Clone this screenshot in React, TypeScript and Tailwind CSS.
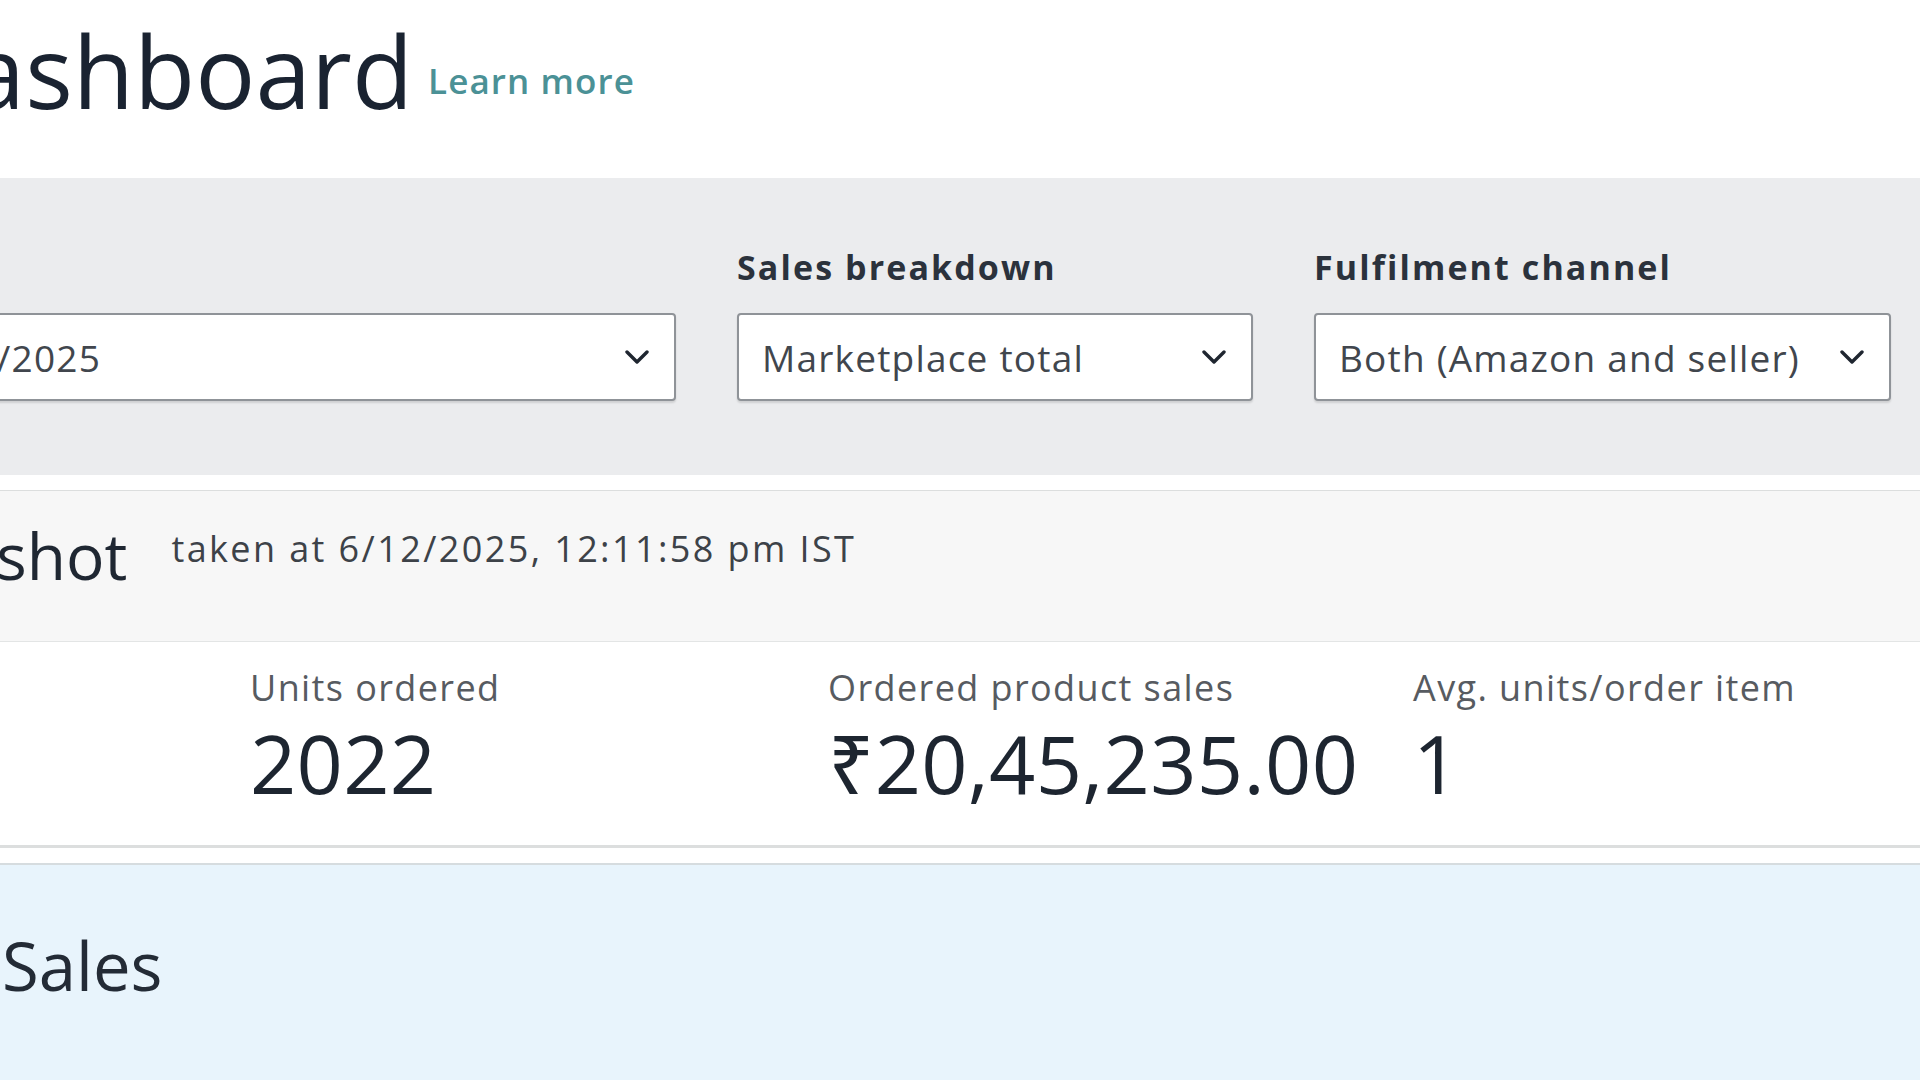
import React from 'react'

function Chevron() {
  return (
    <svg width="24" height="14" viewBox="0 0 24 14" fill="none" className="shrink-0">
      <path d="M2 2 L12 12 L22 2" stroke="#1f2630" strokeWidth="3.4" strokeLinecap="round" strokeLinejoin="round" />
    </svg>
  )
}

interface SelectProps {
  label: string
  value: string
  className: string
}

function FakeSelect({ label, value, className }: SelectProps) {
  return (
    <div className={className}>
      <p className="mb-[29px] text-[34px] font-bold leading-none tracking-[2.1px] text-[#2b323c]">{label}</p>
      <div className="flex h-[88px] items-center justify-between rounded-[4px] border-2 border-[#8f9398] bg-white pl-[23px] pr-[25px] shadow-[0_2px_2px_rgba(0,0,0,0.12)]">
        <span className="whitespace-nowrap text-[37px] leading-none tracking-[1.2px] text-[#41464d]">{value}</span>
        <Chevron />
      </div>
    </div>
  )
}

const metrics = [
  { label: 'Total order items', value: '2022' },
  { label: 'Units ordered', value: '2022' },
  { label: 'Ordered product sales', value: '₹20,45,235.00' },
  { label: 'Avg. units/order item', value: '1' },
]

export default function App() {
  return (
    <div className="h-[1080px] w-[1920px] overflow-hidden bg-white font-['Open_Sans','Noto_Sans',sans-serif]">
      {/* page title */}
      <header className="flex h-[178px] items-start pt-[20px]">
        <h1 className="-ml-[103px] whitespace-nowrap text-[100px] leading-none text-[#1a2331]">Dashboard</h1>
        <a className="ml-[15px] mt-[43px] whitespace-nowrap text-[35px] font-semibold leading-none tracking-[1.1px] text-[#4b9196]">
          Learn more
        </a>
      </header>

      {/* filters */}
      <section className="flex h-[297px] gap-[61px] bg-[#ebecee] pt-[72px]">
        <FakeSelect label="Date" value="6/12/2025" className="-ml-[110px] w-[786px] shrink-0" />
        <FakeSelect label="Sales breakdown" value="Marketplace total" className="w-[516px] shrink-0" />
        <FakeSelect label="Fulfilment channel" value="Both (Amazon and seller)" className="w-[577px] shrink-0" />
      </section>

      {/* snapshot card */}
      <section className="mt-[15px] border-b-[3px] border-t border-[#dcdede]">
        <div className="flex h-[151px] items-start border-b border-[#e3e5e5] bg-[#f7f7f7] pt-[33px]">
          <h2 className="-ml-[318px] whitespace-nowrap text-[64px] leading-none text-[#1f2732]">Sales snapshot</h2>
          <p className="ml-[44px] mt-[7px] whitespace-nowrap text-[36px] leading-none tracking-[2.4px] text-[#3d4248]">
            taken at 6/12/2025, 12:11:58 pm IST
          </p>
        </div>
        <div className="-ml-[330px] grid h-[203px] grid-cols-[580px_578px_585px_1fr] pt-[28px]">
          {metrics.map((m) => (
            <div key={m.label}>
              <p className="whitespace-nowrap text-[36px] leading-none tracking-[1.4px] text-[#575b61]">{m.label}</p>
              <p className="mt-[16px] whitespace-nowrap text-[81px] leading-none tracking-[0.3px] text-[#1d2530]">{m.value}</p>
            </div>
          ))}
        </div>
      </section>

      {/* sales card */}
      <section className="mt-[15px] h-[300px] border-t-2 border-[#d6dcdf] bg-[#e8f4fc] pt-[67px]">
        <h2 className="ml-[2px] text-[67px] leading-none text-[#232b36]">Sales</h2>
      </section>
    </div>
  )
}
